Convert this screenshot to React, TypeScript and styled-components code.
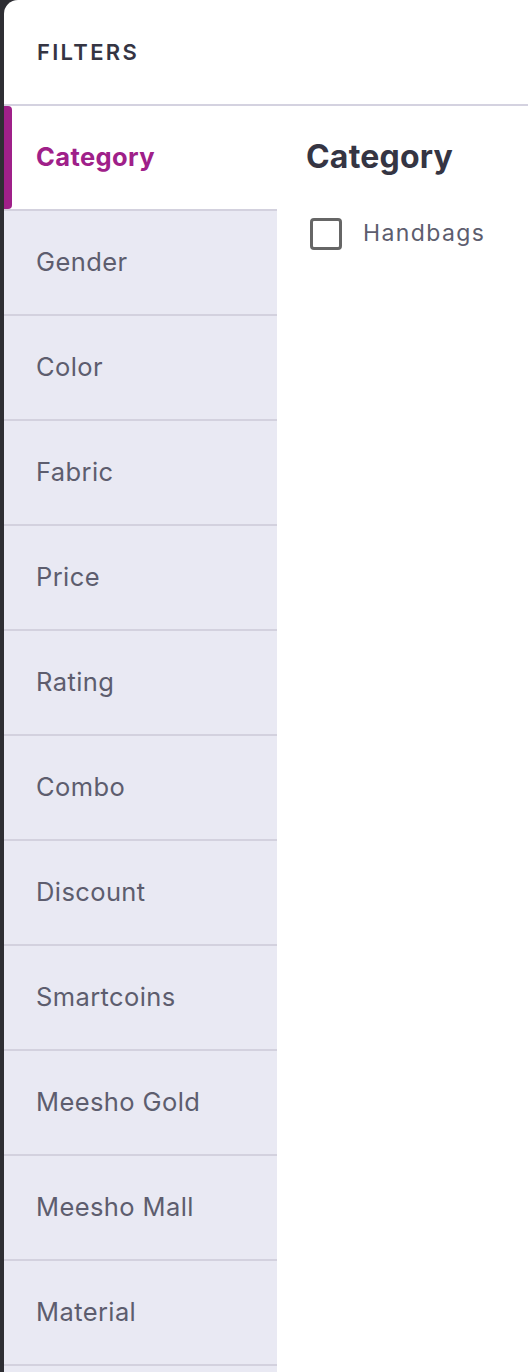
import React from 'react';
import styled, { createGlobalStyle } from 'styled-components';

const filters = [
  'Category',
  'Gender',
  'Color',
  'Fabric',
  'Price',
  'Rating',
  'Combo',
  'Discount',
  'Smartcoins',
  'Meesho Gold',
  'Meesho Mall',
  'Material',
];

const GlobalStyle = createGlobalStyle`
  html, body {
    margin: 0;
    padding: 0;
    background: #2e2e33;
    font-family: Inter, "Noto Sans", sans-serif;
  }
`;

export default function App(): React.ReactElement {
  const active = 'Category';
  return (
    <>
      <GlobalStyle />
      <Sheet>
        <Header>FILTERS</Header>
        <Body>
          <Sidebar>
            {filters.map((name) => (
              <Tab key={name} $active={name === active}>
                {name}
              </Tab>
            ))}
            <Tab $active={false} />
          </Sidebar>
          <Panel>
            <PanelTitle>{active}</PanelTitle>
            <Option>
              <Box type="checkbox" />
              <OptionLabel>Handbags</OptionLabel>
            </Option>
          </Panel>
        </Body>
      </Sheet>
    </>
  );
}

const Sheet = styled('div')`
  margin-left: 4px;
  height: 1372px;
  overflow: hidden;
  background: #ffffff;
  border-top-left-radius: 14px;
  display: flex;
  flex-direction: column;
`;

const Header = styled('div')`
  height: 106px;
  flex-shrink: 0;
  box-sizing: border-box;
  padding: 0 0 0 33px;
  display: flex;
  align-items: center;
  font-size: 22px;
  font-weight: 600;
  letter-spacing: 2.3px;
  color: #353543;
  border-bottom: 2px solid #d4d2e0;
`;

const Body = styled('div')`
  display: flex;
  flex: 1;
  min-height: 0;
`;

const Sidebar = styled('div')`
  width: 273px;
  background: #e9e9f3;
  display: flex;
  flex-direction: column;
`;

const Tab = styled('div')<{ $active: boolean }>`
  position: relative;
  height: 105px;
  flex-shrink: 0;
  box-sizing: border-box;
  padding-left: 32px;
  padding-bottom: 3px;
  display: flex;
  align-items: center;
  border-bottom: 2px solid #d3d1de;
  background: ${(p) => (p.$active ? '#ffffff' : 'transparent')};
  color: ${(p) => (p.$active ? '#9f2089' : '#5d5d6e')};
  font-size: 25.5px;
  font-weight: ${(p) => (p.$active ? 700 : 400)};
  letter-spacing: 0.4px;

  &::before {
    content: '';
    display: ${(p) => (p.$active ? 'block' : 'none')};
    position: absolute;
    left: 0;
    top: 0;
    bottom: 0;
    width: 8px;
    background: #9f2089;
    border-radius: 0 4px 4px 0;
  }
`;

const Panel = styled('div')`
  flex: 1;
  padding: 31px 0 0 29px;
  display: flex;
  flex-direction: column;
  gap: 42px;
`;

const PanelTitle = styled('div')`
  font-size: 32px;
  font-weight: 700;
  color: #353543;
  letter-spacing: 0.2px;
`;

const Option = styled('label')`
  display: flex;
  align-items: center;
  gap: 21px;
  padding-left: 4px;
`;

const Box = styled('input')`
  appearance: none;
  margin: 0;
  width: 32px;
  height: 32px;
  box-sizing: border-box;
  border: 3px solid #666666;
  border-radius: 4px;
  background: #ffffff;
`;

const OptionLabel = styled('span')`
  font-size: 23px;
  color: #5d5d6e;
  letter-spacing: 1.4px;
  padding-bottom: 2px;
`;
